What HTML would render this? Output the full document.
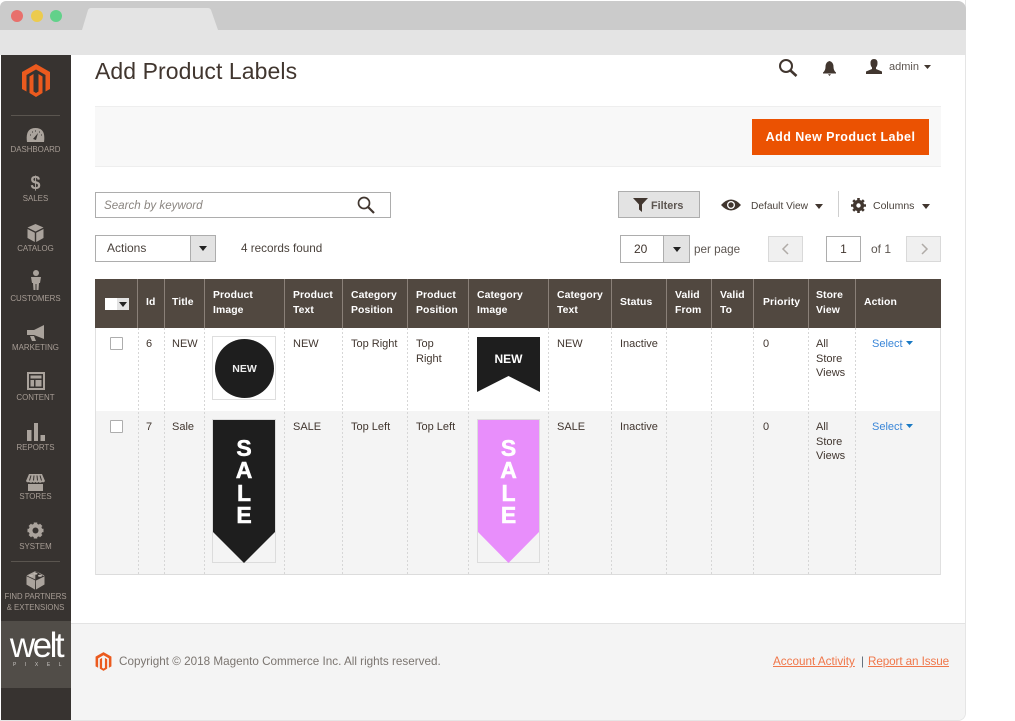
<!DOCTYPE html>
<html><head><meta charset="utf-8"><style>
html,body{margin:0;padding:0;background:#fff;width:1015px;height:721px;overflow:hidden}
body{position:relative;font-family:"Liberation Sans",sans-serif;color:#41362f;font-size:11px}
.a{position:absolute}
.t{position:absolute;white-space:nowrap;line-height:14px}
.h{position:absolute;white-space:nowrap;line-height:14.6px;color:#fff;font-weight:bold;font-size:10.400px;letter-spacing:.1px}
.n{position:absolute;left:0;width:71px;text-align:center;color:#a79d95;font-size:7.900px;line-height:11px;white-space:nowrap}
.vw{position:absolute;width:1px;top:328px;height:246px;background-image:linear-gradient(#d6d6d6 50%,transparent 50%);background-size:1px 4px}
.vh{position:absolute;width:1px;top:279px;height:49px;background:#8a8078}
.cb{position:absolute;left:110px;width:11px;height:11px;background:#fff;border:1px solid #adadad;border-radius:1px}
.sl{position:absolute;text-align:center;color:#fff;font-weight:bold;font-size:23px;line-height:22.300px;-webkit-text-stroke:.5px #fff}
svg{position:absolute;display:block}
</style></head><body>
<!-- window -->
<div class="a" style="left:0;top:0;width:966px;height:721px;background:#fff;border-radius:0 0 8px 0;box-sizing:border-box;border-right:1px solid #e5e5e5;border-bottom:1px solid #e5e5e5"></div>
<div class="a" style="left:0;top:1px;width:966px;height:29px;background:#cbcbcb;border-radius:6px 8px 0 0"></div>
<div class="a" style="left:0;top:30px;width:966px;height:24.500px;background:#e4e4e4"></div>
<svg style="left:80px;top:7px" width="140" height="24"><path d="M2 23 L8 3 Q9 1 11 1 L128 1 Q130 1 131 3 L138 23 Z" fill="#e4e4e4"/></svg>
<div class="a" style="left:11px;top:10px;width:12px;height:12px;border-radius:50%;background:#e8706c"></div>
<div class="a" style="left:31px;top:10px;width:12px;height:12px;border-radius:50%;background:#eccb4e"></div>
<div class="a" style="left:50px;top:10px;width:12px;height:12px;border-radius:50%;background:#62d18a"></div>

<!-- sidebar -->
<div class="a" style="left:1px;top:55px;width:70px;height:665px;background:#373330"></div>
<svg style="left:21px;top:64px" width="30" height="33" viewBox="0 0 30 33"><path d="M15 0 L29 8 V25 L24.500 27.500 V11 L15 5.500 L5.500 11 V27.500 L1 25 V8 Z M12.500 10 V27.500 L15 29 L17.500 27.500 V10 L21.500 12.500 V29 L15 33 L8.500 29 V12.500 Z" fill="#eb5a1e"/></svg>
<div class="a" style="left:11px;top:115px;width:49px;height:1px;background:#5a554f"></div>
<svg style="left:26px;top:127px" width="19" height="16" viewBox="0 0 19 16"><path d="M1 15 Q-1 1 9.500 1 Q20 1 18 15 Z" fill="#aaa39c"/><path d="M7 12 L12 6 L10 13 Z" fill="#373330"/><path d="M4 8h1M6 5h1M9 4h1M13 5h1M15 8h1" stroke="#373330"/></svg>
<div class="n" style="top:144px">DASHBOARD</div>
<div class="a" style="left:0;top:172px;width:71px;text-align:center;color:#aaa39c;font-weight:bold;font-size:18px;line-height:22px">$</div>
<div class="n" style="top:193px">SALES</div>
<svg style="left:27px;top:224px" width="17" height="18" viewBox="0 0 17 18"><path d="M8.500 0 L16.500 3.500 L8.500 7.500 L.5 3.500Z" fill="#aaa39c"/><path d="M.5 5 L7.800 8.800 V18 L.5 14Z M16.500 5 L9.200 8.800 V18 L16.500 14Z" fill="#aaa39c"/></svg>
<div class="n" style="top:243px">CATALOG</div>
<svg style="left:30px;top:270px" width="12" height="20" viewBox="0 0 12 20"><circle cx="6" cy="3" r="3" fill="#aaa39c"/><path d="M1 7 H11 L10 13 H9 L8.500 20 H6.500 V14 H5.500 V20 H3.500 L3 13 H2Z" fill="#aaa39c"/></svg>
<div class="n" style="top:293px">CUSTOMERS</div>
<svg style="left:26px;top:325px" width="19" height="16" viewBox="0 0 19 16"><path d="M18 0 V14 L8 10 H1 V5 H8 Z" fill="#aaa39c"/><path d="M4 11 H8 L10 16 H6Z" fill="#aaa39c"/></svg>
<div class="n" style="top:342px">MARKETING</div>
<svg style="left:27px;top:372px" width="18" height="18" viewBox="0 0 18 18"><path d="M0 0H18V18H0Z M2 2V16H16V2Z" fill="#aaa39c" fill-rule="evenodd"/><path d="M3.500 3.500H14.500V6.500H3.500Z M3.500 8H7V14.500H3.500Z M8.500 8H14.500V14.500H8.500Z" fill="#aaa39c"/></svg>
<div class="n" style="top:392px">CONTENT</div>
<svg style="left:27px;top:423px" width="18" height="18" viewBox="0 0 18 18"><path d="M0 7H4.500V18H0Z M7 0H11V18H7Z M13.500 12H18V18H13.500Z" fill="#aaa39c"/></svg>
<div class="n" style="top:442px">REPORTS</div>
<svg style="left:26px;top:474px" width="19" height="17" viewBox="0 0 19 17"><path d="M3 0H16L19 7 Q18 9 16 8 Q14 9.500 12.500 8 Q11 9.500 9.500 8 Q8 9.500 6.500 8 Q5 9.500 3 8 Q1 9 0 7Z" fill="#aaa39c"/><path d="M5 1.500 L3.500 6.500M8 1.500 L7.500 6.500M11 1.500 L11.500 6.500M14 1.500 L15.500 6.500" stroke="#373330"/><path d="M2 10H17V17H2Z" fill="#aaa39c"/></svg>
<div class="n" style="top:491px">STORES</div>
<svg style="left:26px;top:521px" width="19" height="19" viewBox="0 0 19 19"><circle cx="9.500" cy="9.500" r="4.800" fill="none" stroke="#aaa39c" stroke-width="4"/><path d="M9.500 1.500V17.500M1.500 9.500H17.500M3.800 3.800L15.200 15.200M15.200 3.800L3.800 15.200" stroke="#aaa39c" stroke-width="3.500"/><circle cx="9.500" cy="9.500" r="3" fill="#373330"/></svg>
<div class="n" style="top:541px">SYSTEM</div>
<div class="a" style="left:11px;top:561px;width:49px;height:1px;background:#5a554f"></div>
<svg style="left:26px;top:571px" width="19" height="19" viewBox="0 0 19 19"><path d="M9.500 0 L18.500 4.500 V13.500 L10 18.500 V9.500 L18 5.500 M9 18.500 L.5 13.500 V4.500 L9.500 0 Z" fill="#aaa39c"/><path d="M.5 5.500 L9 9.500 V18.500 L.5 13.500Z" fill="#aaa39c"/><path d="M.5 4.800 L9.500 9 L18.500 4.800" stroke="#373330" fill="none" stroke-width=".8"/><ellipse cx="9.500" cy="2.600" rx="2" ry="1" fill="#bdb6af"/><ellipse cx="5" cy="4.800" rx="2" ry="1" fill="#bdb6af"/><ellipse cx="14" cy="4.800" rx="2" ry="1" fill="#bdb6af"/></svg>
<div class="n" style="top:591px;font-size:7.800px">FIND PARTNERS</div>
<div class="n" style="top:602px;font-size:7.800px">&amp; EXTENSIONS</div>
<div class="a" style="left:1px;top:621px;width:70px;height:67px;background:#514d48"></div>
<div class="t" style="left:7px;top:626px;width:58px;text-align:center;color:#fff;font-size:35px;line-height:40px;letter-spacing:-2.500px">welt</div>
<div class="t" style="left:13px;top:662px;color:#c9c6c3;font-size:5px;line-height:7px;letter-spacing:8.600px">PIXEL</div>

<!-- header -->
<div class="t" style="left:95px;top:56px;font-size:23px;line-height:30px;color:#41362f;letter-spacing:.08px">Add Product Labels</div>
<svg style="left:778px;top:58px" width="20" height="20" viewBox="0 0 20 20"><circle cx="8" cy="8" r="6" fill="none" stroke="#41362f" stroke-width="2"/><path d="M12.500 12.500L18.500 18" stroke="#41362f" stroke-width="2.600"/></svg>
<svg style="left:823px;top:61px" width="13" height="15" viewBox="0 0 13 15"><path d="M6.500 0 Q10.500 1 10.500 6 Q10.500 9.500 13 11.500 V12.500 H0 V11.500 Q2.500 9.500 2.500 6 Q2.500 1 6.500 0Z M5 13.300 H8 L6.500 15Z" fill="#41362f"/></svg>
<svg style="left:866px;top:59px" width="16" height="16" viewBox="0 0 16 16"><path d="M8 0 Q11.500 0 11.500 4 Q11.500 7 10 8.500 V10 L16 12.500 V15 H0 V12.500 L6 10 V8.500 Q4.500 7 4.500 4 Q4.500 0 8 0Z" fill="#41362f"/></svg>
<div class="t" style="left:889px;top:60px;font-size:11px;color:#5c5550">admin</div>
<svg style="left:924px;top:65px" width="7" height="4"><path d="M0 0H7L3.500 4Z" fill="#41362f"/></svg>

<!-- action bar -->
<div class="a" style="left:95px;top:106px;width:846px;height:61px;box-sizing:border-box;background:#f8f8f8;border-top:1px solid #eee;border-bottom:1px solid #eee"></div>
<div class="a" style="left:752px;top:119px;width:177px;height:36px;background:#eb5202;color:#fff;font-weight:bold;font-size:12.500px;line-height:36px;text-align:center;letter-spacing:.45px">Add New Product Label</div>

<!-- search -->
<div class="a" style="left:95px;top:192px;width:296px;height:26px;box-sizing:border-box;border:1px solid #adadad;background:#fff"></div>
<div class="t" style="left:104px;top:199px;font-style:italic;color:#8a8580;font-size:11.600px">Search by keyword</div>
<svg style="left:357px;top:196px" width="18" height="18" viewBox="0 0 18 18"><circle cx="7" cy="7" r="5.500" fill="none" stroke="#41362f" stroke-width="1.700"/><path d="M11 11L17 17" stroke="#41362f" stroke-width="2.200"/></svg>

<!-- filters -->
<div class="a" style="left:618px;top:191px;width:82px;height:27px;box-sizing:border-box;background:#e3e3e3;border:1px solid #adadad"></div>
<svg style="left:633px;top:198px" width="15" height="14" viewBox="0 0 15 14"><path d="M0 0H15L9 6.500V14L6 11.500V6.500Z" fill="#41362f"/></svg>
<div class="t" style="left:651px;top:199px;font-weight:bold;font-size:10.800px;color:#5c5550">Filters</div>
<svg style="left:721px;top:198px" width="20" height="14" viewBox="0 0 20 14"><path d="M0 7 Q10 -4 20 7 Q10 18 0 7Z" fill="#41362f"/><circle cx="10" cy="7" r="4" fill="#fff"/><circle cx="10" cy="7" r="2.700" fill="#41362f"/></svg>
<div class="t" style="left:751px;top:199px;font-size:10.200px;line-height:15px;color:#4a423c">Default View</div>
<svg style="left:815px;top:204px" width="8" height="5"><path d="M0 0H8L4 5Z" fill="#41362f"/></svg>
<div class="a" style="left:838px;top:191px;width:1px;height:26px;background:#cfcfcf"></div>
<svg style="left:851px;top:198px" width="15" height="15" viewBox="0 0 15 15"><circle cx="7.500" cy="7.500" r="4" fill="none" stroke="#41362f" stroke-width="3.200"/><path d="M7.500 0V15M0 7.500H15M2.200 2.200L12.800 12.800M12.800 2.200L2.200 12.800" stroke="#41362f" stroke-width="2.600"/><circle cx="7.500" cy="7.500" r="2.200" fill="#fff"/></svg>
<div class="t" style="left:873px;top:199px;font-size:10.500px;line-height:15px;color:#4a423c">Columns</div>
<svg style="left:922px;top:204px" width="8" height="5"><path d="M0 0H8L4 5Z" fill="#41362f"/></svg>

<!-- actions -->
<div class="a" style="left:95px;top:235px;width:121px;height:27px;box-sizing:border-box;border:1px solid #adadad;background:#fff"></div>
<div class="a" style="left:190px;top:235px;width:26px;height:27px;box-sizing:border-box;border:1px solid #adadad;background:#e3e3e3"></div>
<svg style="left:199px;top:246px" width="8" height="5"><path d="M0 0H8L4 5Z" fill="#222"/></svg>
<div class="t" style="left:107px;top:241px;font-size:12px;color:#4a423c">Actions</div>
<div class="t" style="left:241px;top:242px;font-size:11.700px;color:#4a423c">4 records found</div>

<!-- pager -->
<div class="a" style="left:620px;top:235px;width:70px;height:28px;box-sizing:border-box;border:1px solid #adadad;background:#fff"></div>
<div class="a" style="left:663px;top:235px;width:27px;height:28px;box-sizing:border-box;border:1px solid #adadad;background:#e3e3e3"></div>
<svg style="left:673px;top:247px" width="8" height="5"><path d="M0 0H8L4 5Z" fill="#222"/></svg>
<div class="t" style="left:634px;top:242px;font-size:12px;color:#41362f">20</div>
<div class="t" style="left:694px;top:243px;font-size:11.700px;color:#5c5550">per page</div>
<div class="a" style="left:768px;top:236px;width:35px;height:26px;box-sizing:border-box;border:1px solid #d9d9d9;background:#f0f0f0"></div>
<svg style="left:781px;top:243px" width="8" height="12"><path d="M7 1L2 6L7 11" fill="none" stroke="#b0aba7" stroke-width="1.500"/></svg>
<div class="a" style="left:826px;top:236px;width:35px;height:26px;box-sizing:border-box;border:1px solid #adadad;background:#fff;text-align:center;line-height:24px;font-size:12px;color:#41362f">1</div>
<div class="t" style="left:871px;top:242px;font-size:12px;color:#5c5550">of 1</div>
<div class="a" style="left:906px;top:236px;width:35px;height:26px;box-sizing:border-box;border:1px solid #d9d9d9;background:#f0f0f0"></div>
<svg style="left:921px;top:243px" width="8" height="12"><path d="M1 1L6 6L1 11" fill="none" stroke="#b0aba7" stroke-width="1.500"/></svg>

<!-- table -->
<div class="a" style="left:95px;top:279px;width:846px;height:49px;background:#514840"></div>
<div class="a" style="left:95px;top:328px;width:846px;height:83px;background:#fff"></div>
<div class="a" style="left:95px;top:411px;width:846px;height:164px;box-sizing:border-box;background:#f4f4f4;border-bottom:1px solid #dcdcdc"></div>
<div class="a" style="left:95px;top:328px;width:1px;height:247px;background:#e0e0e0"></div>
<div class="a" style="left:940px;top:328px;width:1px;height:247px;background:#e0e0e0"></div>
<div class="vh" style="left:137px"></div><div class="vh" style="left:164px"></div><div class="vh" style="left:204px"></div><div class="vh" style="left:284px"></div><div class="vh" style="left:342px"></div><div class="vh" style="left:407px"></div><div class="vh" style="left:468px"></div><div class="vh" style="left:548px"></div><div class="vh" style="left:611px"></div><div class="vh" style="left:666px"></div><div class="vh" style="left:711px"></div><div class="vh" style="left:753px"></div><div class="vh" style="left:808px"></div><div class="vh" style="left:855px"></div>
<div class="vw" style="left:138px"></div><div class="vw" style="left:164px"></div><div class="vw" style="left:204px"></div><div class="vw" style="left:284px"></div><div class="vw" style="left:342px"></div><div class="vw" style="left:407px"></div><div class="vw" style="left:468px"></div><div class="vw" style="left:548px"></div><div class="vw" style="left:611px"></div><div class="vw" style="left:666px"></div><div class="vw" style="left:711px"></div><div class="vw" style="left:753px"></div><div class="vw" style="left:808px"></div><div class="vw" style="left:855px"></div>

<div class="a" style="left:105px;top:298px;width:12px;height:12px;background:#fff"></div>
<div class="a" style="left:117px;top:298px;width:12px;height:12px;background:#e3e3e3"></div>
<svg style="left:119px;top:302px" width="8" height="5"><path d="M0 0H8L4 5Z" fill="#222"/></svg>
<div class="h" style="left:146px;top:296px">Id</div>
<div class="h" style="left:172px;top:296px">Title</div>
<div class="h" style="left:213px;top:289px">Product<br>Image</div>
<div class="h" style="left:293px;top:289px">Product<br>Text</div>
<div class="h" style="left:351px;top:289px">Category<br>Position</div>
<div class="h" style="left:416px;top:289px">Product<br>Position</div>
<div class="h" style="left:477px;top:289px">Category<br>Image</div>
<div class="h" style="left:557px;top:289px">Category<br>Text</div>
<div class="h" style="left:620px;top:296px">Status</div>
<div class="h" style="left:675px;top:289px">Valid<br>From</div>
<div class="h" style="left:720px;top:289px">Valid<br>To</div>
<div class="h" style="left:763px;top:296px">Priority</div>
<div class="h" style="left:816px;top:289px">Store<br>View</div>
<div class="h" style="left:864px;top:296px">Action</div>

<!-- row 1 -->
<div class="cb" style="top:337px"></div>
<div class="t" style="left:146px;top:337px">6</div>
<div class="t" style="left:172px;top:337px">NEW</div>
<div class="a" style="left:212px;top:336px;width:64px;height:64px;box-sizing:border-box;border:1px solid #dedede;background:#fff"></div>
<div class="a" style="left:215px;top:339px;width:59px;height:59px;border-radius:50%;background:#1e1e1e"></div>
<div class="a" style="left:215px;top:362px;width:59px;text-align:center;color:#eee;font-weight:bold;font-size:10.500px;line-height:14px">NEW</div>
<div class="t" style="left:293px;top:337px">NEW</div>
<div class="t" style="left:351px;top:337px">Top Right</div>
<div class="t" style="left:416px;top:337px;line-height:14.500px">Top<br>Right</div>
<svg style="left:477px;top:337px" width="63" height="56"><path d="M0 0H63V55L31.500 39L0 55Z" fill="#1e1e1e"/></svg>
<div class="a" style="left:477px;top:352px;width:63px;text-align:center;color:#fff;font-weight:bold;font-size:12px;line-height:14px">NEW</div>
<div class="t" style="left:557px;top:337px">NEW</div>
<div class="t" style="left:620px;top:337px">Inactive</div>
<div class="t" style="left:763px;top:337px">0</div>
<div class="t" style="left:816px;top:337px;line-height:14.500px">All<br>Store<br>Views</div>
<div class="t" style="left:872px;top:337px;color:#3a86d8">Select</div>
<svg style="left:906px;top:341px" width="7" height="4"><path d="M0 0H7L3.500 4Z" fill="#1979c3"/></svg>

<!-- row 2 -->
<div class="cb" style="top:420px"></div>
<div class="t" style="left:146px;top:420px">7</div>
<div class="t" style="left:172px;top:420px">Sale</div>
<div class="a" style="left:212px;top:419px;width:64px;height:144px;box-sizing:border-box;border:1px solid #dcdcdc"></div>
<svg style="left:213px;top:420px" width="62" height="143"><path d="M0 0H62V112L31 143L0 112Z" fill="#1e1e1e"/></svg>
<div class="sl" style="left:213px;top:437px;width:62px">S<br>A<br>L<br>E</div>
<div class="t" style="left:293px;top:420px">SALE</div>
<div class="t" style="left:351px;top:420px">Top Left</div>
<div class="t" style="left:416px;top:420px">Top Left</div>
<div class="a" style="left:477px;top:419px;width:63px;height:144px;box-sizing:border-box;border:1px solid #dcdcdc"></div>
<svg style="left:478px;top:420px" width="61" height="143"><path d="M0 0H61V112L30.500 143L0 112Z" fill="#e88efb"/></svg>
<div class="sl" style="left:478px;top:437px;width:61px">S<br>A<br>L<br>E</div>
<div class="t" style="left:557px;top:420px">SALE</div>
<div class="t" style="left:620px;top:420px">Inactive</div>
<div class="t" style="left:763px;top:420px">0</div>
<div class="t" style="left:816px;top:420px;line-height:14.500px">All<br>Store<br>Views</div>
<div class="t" style="left:872px;top:420px;color:#3a86d8">Select</div>
<svg style="left:906px;top:424px" width="7" height="4"><path d="M0 0H7L3.500 4Z" fill="#1979c3"/></svg>

<!-- footer -->
<div class="a" style="left:71px;top:623px;width:894px;height:97px;box-sizing:border-box;background:#f4f4f4;border-top:1px solid #e3e3e3;border-radius:0 0 7px 0"></div>
<svg style="left:95px;top:652px" width="17" height="19" viewBox="0 0 30 33"><path d="M15 0 L29 8 V25 L24.500 27.500 V11 L15 5.500 L5.500 11 V27.500 L1 25 V8 Z M12.500 10 V27.500 L15 29 L17.500 27.500 V10 L21.500 12.500 V29 L15 33 L8.500 29 V12.500 Z" fill="#eb5a1e"/></svg>
<div class="t" style="left:119px;top:655px;font-size:11.700px;color:#7b7570">Copyright © 2018 Magento Commerce Inc. All rights reserved.</div>
<div class="t" style="left:773px;top:655px;font-size:11.700px;color:#f0774a;text-decoration:underline">Account Activity</div>
<div class="t" style="left:861px;top:655px;font-size:11.700px;color:#5f6b78">|</div>
<div class="t" style="left:868px;top:655px;font-size:11.700px;letter-spacing:-.1px;color:#f0774a;text-decoration:underline">Report an Issue</div>
</body></html>
